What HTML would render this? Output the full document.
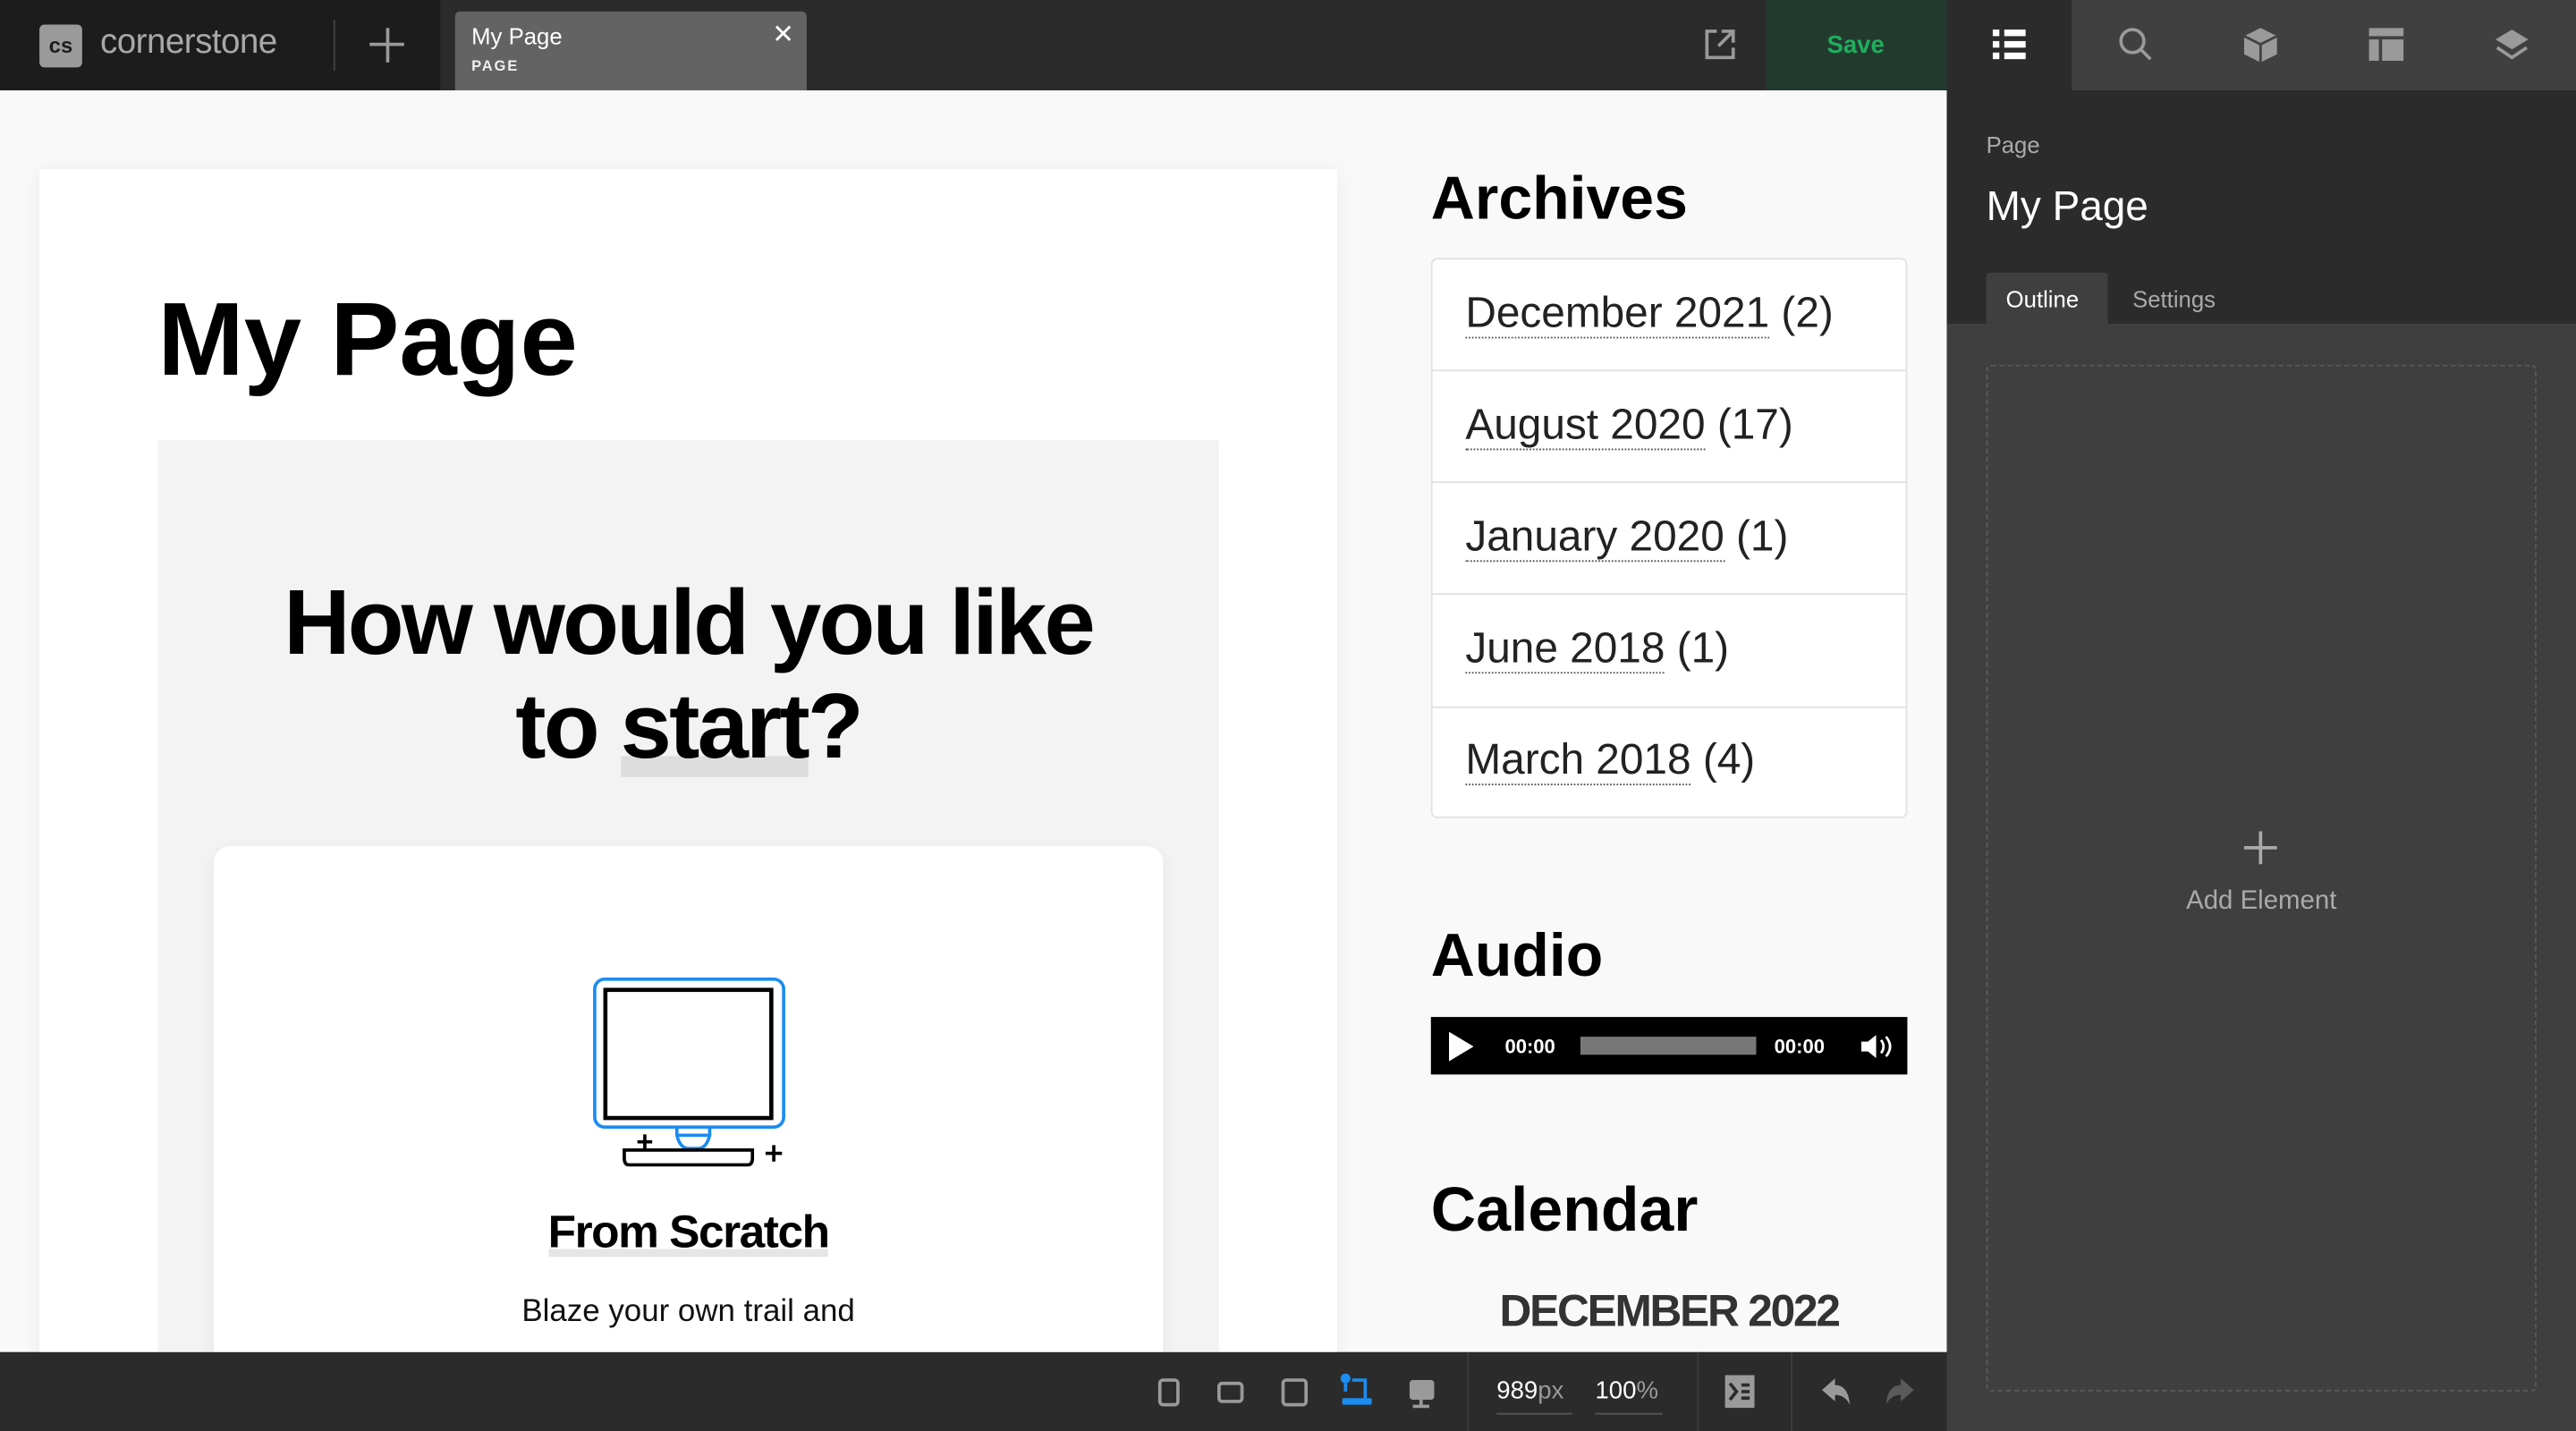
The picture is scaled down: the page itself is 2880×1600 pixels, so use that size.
<!DOCTYPE html>
<html><head><meta charset="utf-8"><style>
*{box-sizing:border-box;margin:0;padding:0}
html,body{width:2880px;height:1600px;overflow:hidden;background:#2b2b2b;position:relative}
#w{position:absolute;left:0;top:0;width:1568px;height:871px;overflow:hidden;transform:scale(1.83673,1.83697);transform-origin:0 0;font-family:"Liberation Sans",sans-serif}
.a{position:absolute}
.ic{stroke:#9a9a9a;fill:none;stroke-width:2}
</style></head><body><div id="w">
<!-- top bar -->
<div class="a" style="left:0;top:0;width:268px;height:55px;background:#1c1c1c"></div>
<div class="a" style="left:268px;top:0;width:807px;height:55px;background:#2b2b2b"></div>
<div class="a" style="left:1075px;top:0;width:110px;height:55px;background:#233a2f"></div>
<div class="a" style="left:1185px;top:0;width:76px;height:55px;background:#2b2b2b"></div>
<div class="a" style="left:1261px;top:0;width:307px;height:55px;background:#404040"></div>
<div class="a" style="left:24px;top:15px;width:26px;height:26px;background:#9a9a9a;border-radius:3px;color:#1c1c1c;font-size:13px;font-weight:bold;text-align:center;line-height:26px">cs</div>
<div class="a" style="left:61px;top:14px;color:#a8a8a8;font-size:21px;letter-spacing:-0.3px">cornerstone</div>
<div class="a" style="left:203px;top:12px;width:1px;height:31px;background:#444"></div>
<div class="a" style="left:225px;top:26px;width:21px;height:2px;background:#9a9a9a"></div>
<div class="a" style="left:235px;top:17px;width:2px;height:21px;background:#9a9a9a"></div>
<div class="a" style="left:277px;top:7px;width:214px;height:48px;background:#636363;border-radius:3px 3px 0 0"></div>
<div class="a" style="left:287px;top:14px;color:#fff;font-size:14px">My Page</div>
<div class="a" style="left:287px;top:35px;color:#eee;font-size:9px;font-weight:bold;letter-spacing:1px">PAGE</div>
<div class="a" style="left:470px;top:11px;color:#fff;font-size:16px">✕</div>
<svg class="a" style="left:1036px;top:16px" width="22" height="22"><path class="ic" d="M9 3H3v16h16v-6M12 3h7v7M19 3l-9 9"/></svg>
<div class="a" style="left:1112px;top:19px;color:#1fae5c;font-size:15px;font-weight:bold">Save</div>
<svg class="a" style="left:1212px;top:16px" width="22" height="22"><g fill="#fff"><rect x="1" y="2" width="4" height="4"/><rect x="8" y="2" width="13" height="4"/><rect x="1" y="9" width="4" height="4"/><rect x="8" y="9" width="13" height="4"/><rect x="1" y="16" width="4" height="4"/><rect x="8" y="16" width="13" height="4"/></g></svg>
<svg class="a" style="left:1289px;top:16px" width="22" height="22"><circle cx="9" cy="9" r="7" class="ic" stroke-width="2.5"/><path d="M14 14l6 6" class="ic" stroke-width="3"/></svg>
<svg class="a" style="left:1365px;top:16px" width="22" height="22"><path d="M11 1l10 5v11l-10 5-10-5V6z" fill="#9a9a9a"/><path d="M1 6l10 5 10-5M11 11v11" stroke="#404040" stroke-width="1.5" fill="none"/></svg>
<svg class="a" style="left:1442px;top:17px" width="22" height="20"><rect x="0" y="0" width="21" height="5" fill="#9a9a9a"/><rect x="0" y="7" width="6" height="13" fill="#9a9a9a"/><rect x="8" y="7" width="13" height="13" fill="#9a9a9a"/></svg>
<svg class="a" style="left:1518px;top:16px" width="22" height="22"><path d="M11 2l10 6-10 6-10-6z" fill="#9a9a9a"/><path d="M2 13l9 6 9-6" class="ic"/></svg>
<!-- canvas -->
<div class="a" style="left:0;top:55px;width:1185px;height:768px;background:#f9f9f9;overflow:hidden">
 <div class="a" style="left:24px;top:48px;width:790px;height:740px;background:#fff;box-shadow:0 0 12px rgba(0,0,0,.06)"></div>
 <div class="a" style="left:96px;top:116px;font-size:63px;font-weight:bold;color:#000">My Page</div>
 <div class="a" style="left:96px;top:213px;width:646px;height:560px;background:#f3f3f3"></div>
 <div class="a" style="left:96px;top:292px;width:646px;text-align:center;font-size:56px;font-weight:bold;line-height:63px;letter-spacing:-1.5px;color:#000">How would you like<br>to <span style="background:linear-gradient(transparent 80%,#ddd 80%)">start</span>?</div>
 <div class="a" style="left:130px;top:460px;width:578px;height:400px;background:#fff;border-radius:10px;box-shadow:0 2px 10px rgba(0,0,0,.06)"></div>
 <svg class="a" style="left:355px;top:535px" width="130" height="125">
  <rect x="7" y="6" width="115" height="90" rx="6" fill="none" stroke="#1b8cf0" stroke-width="2"/>
  <rect x="13.5" y="12.5" width="101" height="78" fill="none" stroke="#000" stroke-width="2.5"/>
  <path d="M57 96v5q2 8 7 8h6q5 0 7-8v-5M57 101h20" fill="none" stroke="#1b8cf0" stroke-width="2"/>
  <path d="M25 110h78v5q0 4-3 4H28q-3 0-3-4z" fill="none" stroke="#000" stroke-width="2"/>
  <path d="M33 105h9M37.5 100.5v9M111 112h10M116 107v10" stroke="#000" stroke-width="2"/>
 </svg>
 <div class="a" style="left:130px;top:679px;width:578px;text-align:center;font-size:28px;font-weight:bold;letter-spacing:-0.8px;color:#000"><span style="background:linear-gradient(transparent 85%,#e5e5e5 85%)">From Scratch</span></div>
 <div class="a" style="left:130px;top:727px;width:578px;text-align:center;font-size:19px;color:#111;line-height:34px">Blaze your own trail and<br>design your creation</div>
 <!-- sidebar widgets -->
 <div class="a" style="left:871px;top:45px;font-size:37px;font-weight:bold;color:#000">Archives</div>
 <div class="a" style="left:871px;top:102px;width:290px;height:341px;border:1px solid #e2e2e2;border-radius:4px;background:#fff"></div>
 <div class="a" style="left:892px;top:123px;font-size:26px;color:#222;line-height:68px">
  <div style="height:68px;margin-top:-22px"><span style="border-bottom:1px dotted #555">December 2021</span> (2)</div>
  <div style="height:68px"><span style="border-bottom:1px dotted #555">August 2020</span> (17)</div>
  <div style="height:68px"><span style="border-bottom:1px dotted #555">January 2020</span> (1)</div>
  <div style="height:68px"><span style="border-bottom:1px dotted #555">June 2018</span> (1)</div>
  <div style="height:68px"><span style="border-bottom:1px dotted #555">March 2018</span> (4)</div>
 </div>
 <div class="a" style="left:872px;top:170px;width:288px;height:1px;background:#e2e2e2"></div>
 <div class="a" style="left:872px;top:238px;width:288px;height:1px;background:#e2e2e2"></div>
 <div class="a" style="left:872px;top:306px;width:288px;height:1px;background:#e2e2e2"></div>
 <div class="a" style="left:872px;top:375px;width:288px;height:1px;background:#e2e2e2"></div>
 <div class="a" style="left:871px;top:506px;font-size:37px;font-weight:bold;color:#000">Audio</div>
 <div class="a" style="left:871px;top:564px;width:290px;height:35px;background:#000"></div>
 <svg class="a" style="left:880px;top:572px" width="18" height="20"><path d="M2 1l15 9-15 9z" fill="#fff"/></svg>
 <div class="a" style="left:916px;top:575px;color:#fff;font-size:12px;font-weight:bold">00:00</div>
 <div class="a" style="left:962px;top:576px;width:107px;height:11px;background:#777"></div>
 <div class="a" style="left:1080px;top:575px;color:#fff;font-size:12px;font-weight:bold">00:00</div>
 <svg class="a" style="left:1132px;top:573px" width="22" height="18"><path d="M1 6h4l5-4v14l-5-4H1z" fill="#fff"/><path d="M13 5q3 4 0 8M16 3q5 6 0 12" stroke="#fff" fill="none" stroke-width="1.5"/></svg>
 <div class="a" style="left:871px;top:661px;font-size:38px;font-weight:bold;color:#000">Calendar</div>
 <div class="a" style="left:871px;top:728px;width:290px;text-align:center;font-size:27px;font-weight:bold;color:#333;letter-spacing:-1.2px">DECEMBER 2022</div>
</div>
<!-- bottom bar -->
<div class="a" style="left:0;top:823px;width:1185px;height:48px;background:#2b2b2b"></div>
<div class="a" style="left:893px;top:823px;width:1px;height:48px;background:#3c3c3c"></div>
<div class="a" style="left:1033px;top:823px;width:1px;height:48px;background:#3c3c3c"></div>
<div class="a" style="left:1090px;top:823px;width:1px;height:48px;background:#3c3c3c"></div>
<svg class="a" style="left:700px;top:835px" width="180" height="26">
 <rect x="6" y="5" width="11" height="15" rx="2" class="ic"/>
 <rect x="42" y="7" width="14" height="11" rx="2" class="ic"/>
 <rect x="81" y="5" width="14" height="15" rx="2" class="ic"/>
 <circle cx="119" cy="4" r="3" fill="#1b8cf0"/><path d="M119 7v5M123 5h8v11" stroke="#1b8cf0" stroke-width="2" fill="none"/><rect x="117" y="16" width="18" height="4" rx="1" fill="#1b8cf0"/>
 <rect x="158" y="5" width="15" height="12" rx="2" fill="#9a9a9a"/><path d="M165 17v4M160 21h10" stroke="#9a9a9a" stroke-width="2"/>
</svg>
<div class="a" style="left:911px;top:838px;font-size:15px;color:#fff">989<span style="color:#999">px</span></div>
<div class="a" style="left:911px;top:860px;width:46px;height:1px;background:#555"></div>
<div class="a" style="left:971px;top:838px;font-size:15px;color:#fff">100<span style="color:#999">%</span></div>
<div class="a" style="left:971px;top:860px;width:41px;height:1px;background:#555"></div>
<svg class="a" style="left:1050px;top:837px" width="18" height="20"><rect width="18" height="20" fill="#9a9a9a"/><path d="M3 5l4 5-4 5M10 6h5M10 10h5M10 14h5" stroke="#2b2b2b" stroke-width="2" fill="none"/></svg>
<svg class="a" style="left:1107px;top:838px" width="60" height="18"><path d="M2 8l8-7v4q8 0 9 12q-3-6-9-6v4z" fill="#9a9a9a"/><path d="M58 8l-8-7v4q-8 0-9 12q3-6 9-6v4z" fill="#5a5a5a"/></svg>
<!-- right panel -->
<div class="a" style="left:1185px;top:55px;width:383px;height:142px;background:#2b2b2b"></div>
<div class="a" style="left:1185px;top:197px;width:383px;height:674px;background:#3f3f3f"></div>
<div class="a" style="left:1209px;top:80px;color:#aaa;font-size:14px">Page</div>
<div class="a" style="left:1209px;top:112px;color:#fff;font-size:25px">My Page</div>
<div class="a" style="left:1209px;top:166px;width:74px;height:31px;background:#3f3f3f;border-radius:2px 2px 0 0"></div>
<div class="a" style="left:1221px;top:174px;color:#fff;font-size:14px">Outline</div>
<div class="a" style="left:1298px;top:174px;color:#aaa;font-size:14px">Settings</div>
<div class="a" style="left:1209px;top:222px;width:335px;height:625px;border:1px dashed #5a5a5a;border-radius:3px"></div>
<div class="a" style="left:1366px;top:515px;width:20px;height:2px;background:#aaa"></div>
<div class="a" style="left:1375px;top:506px;width:2px;height:20px;background:#aaa"></div>
<div class="a" style="left:1209px;top:540px;width:335px;text-align:center;color:#aaa;font-size:16px">Add Element</div>
</div></body></html>
